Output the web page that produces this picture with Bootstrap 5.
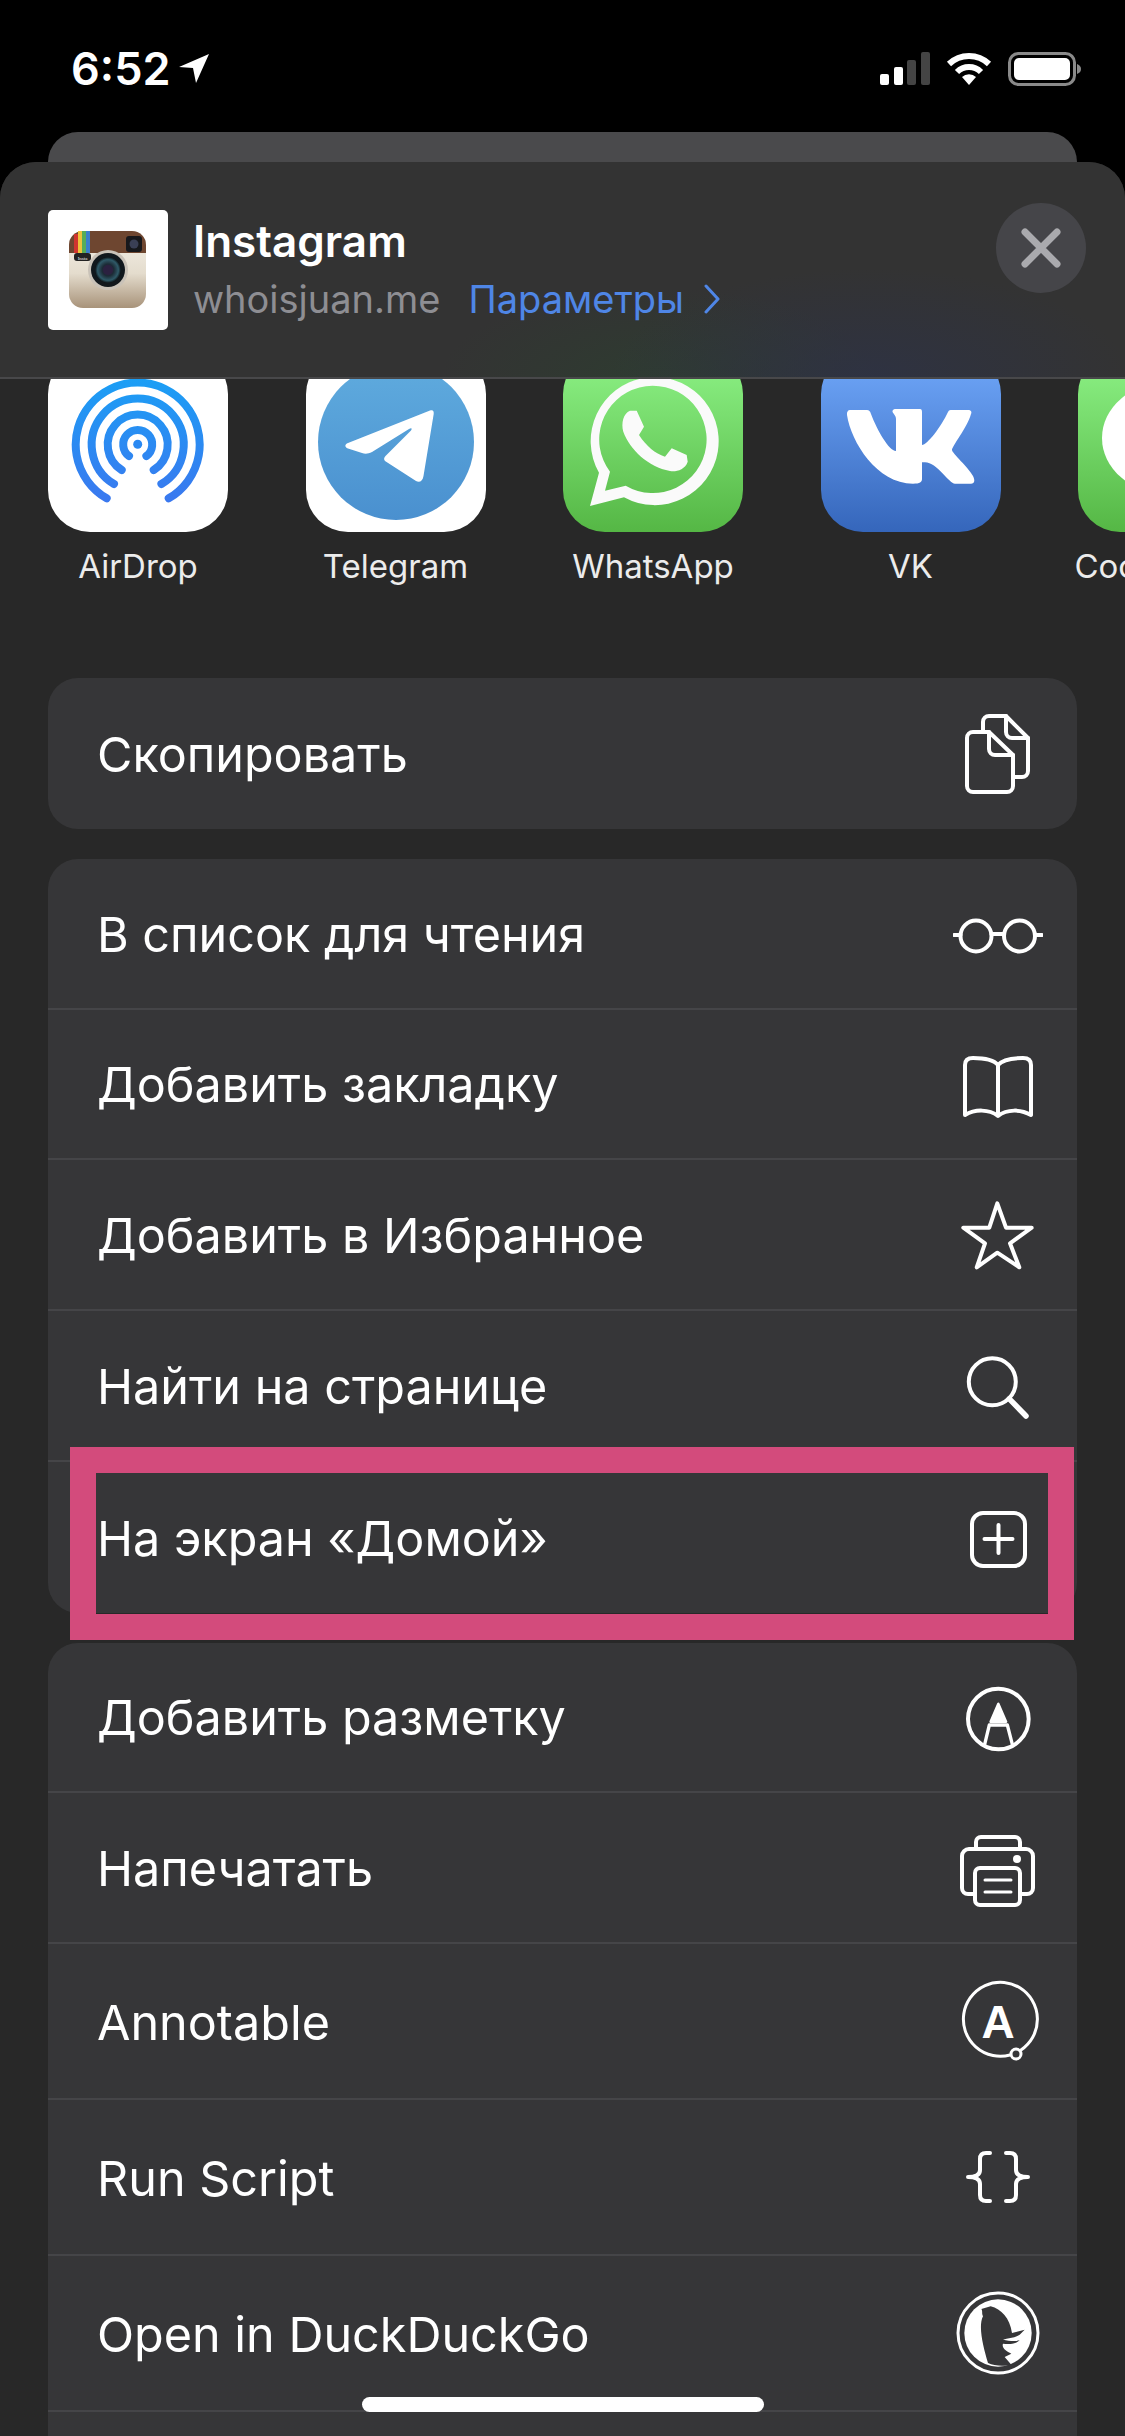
<!doctype html>
<html lang="ru">
  <head>
    <meta charset="utf-8">
    <meta name="viewport" content="width=device-width, initial-scale=1">
    <title>Share sheet</title>
    <link href="https://cdn.jsdelivr.net/npm/bootstrap@5.3.6/dist/css/bootstrap.min.css" rel="stylesheet">
    <style>
      html, body { height: 2436px; }
      body {
        width: 1125px;
        overflow: hidden;
        background: #000;
        color: #fff;
        font-family: Inter, Roboto, "Liberation Sans", sans-serif;
        position: relative;
      }
      .status-bar { height: 132px; padding: 52px 43px 0 71px; }
      .status-time { font-size: 45px; line-height: 34px; font-weight: 600; }
      .back-sheet {
        height: 30px;
        margin: 0 48px;
        background: #4a4a4c;
        border-radius: 36px 36px 0 0;
      }
      .front-sheet {
        height: 2274px;
        background: #282828;
        border-radius: 36px 36px 0 0;
        overflow: hidden;
      }
      .share-head {
        height: 217px;
        padding: 48px 39px 0 48px;
        border-bottom: 2px solid #48484a;
        background:
          radial-gradient(ellipse 260px 110px at 870px 216px, rgba(45, 50, 70, .8), transparent),
          radial-gradient(ellipse 220px 90px at 660px 216px, rgba(45, 62, 48, .8), transparent),
          #333;
      }
      .head-logo { width: 120px; height: 120px; border-radius: 5px; flex: none; }
      .head-text { margin: 6px 0 0 25px; }
      .head-title { font-size: 44px; line-height: 50px; font-weight: 600; }
      .head-sub { margin-top: 8px; font-size: 38px; line-height: 50px; color: #8e8e93; }
      .head-link { margin-left: 28px; color: #4f86e6; }
      .head-chev { margin-left: 20px; }
      .head-close {
        width: 90px;
        height: 90px;
        margin-top: -7px;
        background: #454549;
        border-radius: 50%;
      }
      .app-strip { height: 299px; padding-left: 48px; gap: 77.5px; overflow: hidden; }
      .app-tile { width: 180px; flex: none; margin-top: -27px; }
      .app-tile svg { display: block; border-radius: 42px; }
      .app-name { margin-top: 14px; font-size: 33px; line-height: 40px; color: #ececec; white-space: nowrap; }
      .action-group {
        --bs-list-group-bg: #363638;
        --bs-list-group-color: #fff;
        --bs-list-group-border-width: 0;
        --bs-list-group-border-radius: 30px;
        --bs-list-group-item-padding-x: 0;
        --bs-list-group-item-padding-y: 0;
        margin: 0 48px 30px;
      }
      .action-row {
        height: 150.75px;
        padding-top: 3px !important;
        padding-left: 49px !important;
        padding-right: 34px !important;
        font-size: 48.5px;
        line-height: 60px;
      }
      .action-row:not(:last-child) { border-bottom: 2px solid #454548; }
      .action-row.row-tall { height: 156px; }
      .action-row svg { flex: none; margin-top: -3px; fill: none; stroke: #fff; stroke-width: 4; stroke-linecap: round; stroke-linejoin: round; }
      .pink-frame {
        position: absolute;
        top: -15px;
        left: 22px;
        right: 3px;
        bottom: -27px;
        border: 26px solid #d34b7c;
        z-index: 3;
      }
      .home-bar {
        position: absolute;
        left: 362px;
        top: 2397px;
        width: 402px;
        height: 15px;
        background: #fff;
        border-radius: 8px;
      }
    </style>
  </head>
  <body>
    <div class="status-bar d-flex justify-content-between">
      <div class="d-flex align-items-start">
        <span class="status-time">6:52</span>
        <svg class="ms-2" width="32" height="30" viewBox="0 0 32 30" fill="#fff" style="margin-top:2px"><path d="M1 13 31 0 18 29 15 14Z"/></svg>
      </div>
      <div class="d-flex align-items-start gap-3">
        <svg width="50" height="34" viewBox="0 0 50 34">
          <rect x="0" y="22" width="9" height="11" rx="2" fill="#fff"/>
          <rect x="14" y="15" width="9" height="18" rx="2" fill="#fff"/>
          <rect x="27" y="8" width="9" height="25" rx="2" fill="#444"/>
          <rect x="41" y="0" width="9" height="33" rx="2" fill="#444"/>
        </svg>
        <svg width="46" height="34" viewBox="0 0 46 34" fill="none" stroke="#fff" stroke-width="6">
          <path d="M3 12A29 29 0 0 1 43 12"/>
          <path d="M11 20A17 17 0 0 1 35 20"/>
          <path d="M23 33 16 25A10 10 0 0 1 30 25Z" fill="#fff" stroke="none"/>
        </svg>
        <svg width="74" height="34" viewBox="0 0 74 34">
          <rect x="1.5" y="1.5" width="65" height="31" rx="9" fill="none" stroke="#8a8a8a" stroke-width="3"/>
          <rect x="6" y="6" width="56" height="22" rx="5" fill="#fff"/>
          <path d="M69 12c3 1 4 3 4 5s-1 4-4 5Z" fill="#8a8a8a"/>
        </svg>
      </div>
    </div>
    <div class="back-sheet"></div>
    <div class="front-sheet">
      <div class="share-head d-flex align-items-start">
        <svg class="head-logo" viewBox="0 0 120 120">
          <defs>
            <linearGradient id="igBody" x1="0" y1="0" x2="0" y2="1"><stop offset="0" stop-color="#f5f1ea"/><stop offset=".55" stop-color="#e4dccd"/><stop offset="1" stop-color="#a8937a"/></linearGradient>
            <radialGradient id="igLens"><stop offset="0" stop-color="#3a2c4e"/><stop offset=".45" stop-color="#1c2a35"/><stop offset=".8" stop-color="#2f5a68"/><stop offset="1" stop-color="#0d1418"/></radialGradient>
          </defs>
          <rect width="120" height="120" fill="#fff"/>
          <rect x="21" y="21" width="77" height="77" rx="14" fill="url(#igBody)"/>
          <path d="M21 43V35a14 14 0 0 1 14-14h49a14 14 0 0 1 14 14v8Z" fill="#6e4630"/>
          <path d="M26 43V24h4v19Z" fill="#d0352f"/>
          <path d="M30 43V21h4v22Z" fill="#eec23c"/>
          <path d="M34 43V21h4v22Z" fill="#57ad57"/>
          <path d="M38 43V21h4v22Z" fill="#3b7fcb"/>
          <rect x="26" y="43" width="17" height="8" rx="3" fill="#222"/>
          <text x="34.5" y="49.5" font-size="5" fill="#eee" text-anchor="middle" font-family="Liberation Serif, serif">Insta</text>
          <rect x="78" y="26" width="16" height="16" rx="3" fill="#17181c"/>
          <circle cx="86" cy="34" r="4.5" fill="#3a3f55"/>
          <circle cx="60" cy="60" r="20" fill="#c9c2b8"/>
          <circle cx="60" cy="60" r="17" fill="#11181d"/>
          <circle cx="60" cy="60" r="13" fill="url(#igLens)"/>
          <circle cx="60" cy="60" r="5" fill="#2b2140"/>
        </svg>
        <div class="head-text">
          <div class="head-title">Instagram</div>
          <div class="head-sub d-flex align-items-center">whoisjuan.me
            <span class="head-link d-flex align-items-center">Параметры
              <svg class="head-chev" width="16" height="30" viewBox="0 0 16 30" fill="none" stroke="#4f86e6" stroke-width="3" stroke-linecap="round" stroke-linejoin="round"><path d="M2 2 14 15 2 28"/></svg>
            </span>
          </div>
        </div>
        <div class="head-close ms-auto d-flex align-items-center justify-content-center">
          <svg width="40" height="40" viewBox="0 0 40 40" stroke="#aaaaae" stroke-width="7" stroke-linecap="round"><path d="M4 4 36 36M36 4 4 36"/></svg>
        </div>
      </div>

      <div class="app-strip d-flex">
        <div class="app-tile d-flex flex-column align-items-center">
          <svg width="180" height="180" viewBox="0 0 180 180">
            <defs><linearGradient id="adGrad" gradientUnits="userSpaceOnUse" x1="0" y1="26" x2="0" y2="150"><stop offset="0" stop-color="#1b9ff5"/><stop offset="1" stop-color="#3a78ef"/></linearGradient></defs>
            <rect width="180" height="180" fill="#fff"/>
            <g fill="none" stroke="url(#adGrad)" stroke-width="8" stroke-linecap="round">
              <path d="M58.7 146.3A62 62 0 1 1 120.7 146.3"/>
              <path d="M66 132A46 46 0 1 1 113.4 132"/>
              <path d="M73.7 118A30 30 0 1 1 105.7 118"/>
              <path d="M81 104A14.5 14.5 0 1 1 98.4 104"/>
            </g>
            <circle cx="89.7" cy="92.3" r="4.5" fill="#2a89f2"/>
          </svg>
          <div class="app-name">AirDrop</div>
        </div>
        <div class="app-tile d-flex flex-column align-items-center">
          <svg width="180" height="180" viewBox="0 0 180 180">
            <defs><linearGradient id="tgGrad" x1="0" y1="0" x2="0" y2="1"><stop offset="0" stop-color="#5fabde"/><stop offset="1" stop-color="#4a90cf"/></linearGradient></defs>
            <rect width="180" height="180" fill="#fff"/>
            <circle cx="90" cy="90" r="78" fill="url(#tgGrad)"/>
            <path fill="#fff" d="M124 58.5C127 57.5 128 59 127.7 62L117.5 124C116.8 129 113.5 131 110 129L79 109C77.5 107.5 78 105.5 79.5 104L105 78.5C106.5 76.5 105.5 75.5 103 77L66 100C62 102 59 102 56 101L42 96.5C38.5 95 38.5 92.5 42 91Z"/>
          </svg>
          <div class="app-name">Telegram</div>
        </div>
        <div class="app-tile d-flex flex-column align-items-center">
          <svg width="180" height="180" viewBox="0 0 180 180">
            <defs><linearGradient id="waGrad" x1="0" y1="0" x2="0" y2="1"><stop offset="0" stop-color="#8ef387"/><stop offset="1" stop-color="#55b745"/></linearGradient></defs>
            <rect width="180" height="180" fill="url(#waGrad)"/>
            <path fill="#fafafa" fill-rule="evenodd" d="M27 154 36 120.7A64 64 0 1 1 61 145.3ZM42 138.7 47 119.7A53.7 53.7 0 1 1 62.7 133.7Z"/>
            <path fill="#fafafa" d="M67 58.7H73.7L81 74.7 76 83C83.7 94.7 92 101.3 102 104.7L108.7 96.3 123.7 103 124.7 109.7C122 118 112 120.3 107 119 85.3 114.7 67 98 60.3 79.7 58 71.3 60.3 61.3 67 58.7Z"/>
          </svg>
          <div class="app-name">WhatsApp</div>
        </div>
        <div class="app-tile d-flex flex-column align-items-center">
          <svg width="180" height="180" viewBox="0 0 180 180">
            <defs><linearGradient id="vkGrad" x1="0" y1="0" x2="0" y2="1"><stop offset="0" stop-color="#71a9fb"/><stop offset="1" stop-color="#3566bb"/></linearGradient></defs>
            <rect width="180" height="180" fill="url(#vkGrad)"/>
            <path fill="#fff" d="M29 58H46C48 58 49 59 50 62 56 78 68 99 75 99V67C75 63 71 61 71.5 59 72 57.5 73 57 75 57H99C100.5 57 101 58 101 60V93C106 93 120 75 127 60 128 58 129 58 131 58H147C150 58 151 60 150 62 146 76 131 94 131 98 131 101 148 116 152 124 154 128 154 131.7 150 131.7H134C128 131.7 116 110.3 104 110.3H101V127C101 130 99 131.7 92 131.7 56 131.7 30 90 26 63 25.5 60 27 58 29 58Z"/>
          </svg>
          <div class="app-name">VK</div>
        </div>
        <div class="app-tile d-flex flex-column align-items-center">
          <svg width="180" height="180" viewBox="0 0 180 180">
            <rect width="180" height="180" fill="url(#waGrad)"/>
            <ellipse cx="90" cy="86" rx="66" ry="56" fill="#fff"/>
          </svg>
          <div class="app-name">Сообщения</div>
        </div>
      </div>

      <div class="list-group action-group">
        <div class="list-group-item action-row d-flex justify-content-between align-items-center">
          Скопировать
          <svg width="90" height="90" viewBox="0 0 90 90">
            <path d="M30 24V14a6 6 0 0 1 6-6H53L75 30V63a6 6 0 0 1-6 6H60"/>
            <path d="M53 8V24a6 6 0 0 0 6 6H75"/>
            <path d="M36 24H20a6 6 0 0 0-6 6V78a6 6 0 0 0 6 6H54a6 6 0 0 0 6-6V47Z"/>
            <path d="M36 24V41a6 6 0 0 0 6 6H60"/>
          </svg>
        </div>
      </div>

      <div class="list-group action-group">
        <div class="list-group-item action-row d-flex justify-content-between align-items-center">
          В список для чтения
          <svg width="90" height="90" viewBox="0 0 90 90">
            <circle cx="23" cy="48" r="15.5"/><circle cx="66.5" cy="48" r="15.5"/>
            <path d="M38.5 46H51M1 47H7.5M82 47H89"/>
          </svg>
        </div>
        <div class="list-group-item action-row d-flex justify-content-between align-items-center">
          Добавить закладку
          <svg width="90" height="90" viewBox="0 0 90 90">
            <path d="M45 26C40 20 30 19 20 19 15 19 12 21 12 26V76C22 70 36 70 45 77 54 70 68 70 78 76V26C78 21 75 19 70 19 60 19 50 20 45 26ZM45 26V77"/>
          </svg>
        </div>
        <div class="list-group-item action-row d-flex justify-content-between align-items-center">
          Добавить в Избранное
          <svg width="90" height="90" viewBox="0 0 90 90">
            <path d="M44.3 13.3 53 37.7H78.7L57 53.3 66.3 77.3 44.3 62.7 23.7 77.3 32 53.3 10.3 37.7H36.3Z"/>
          </svg>
        </div>
        <div class="list-group-item action-row d-flex justify-content-between align-items-center">
          Найти на странице
          <svg width="90" height="90" viewBox="0 0 90 90">
            <circle cx="39.3" cy="41.8" r="23.5"/>
            <path d="M56.3 58.8 73 76" stroke-width="5.5"/>
          </svg>
        </div>
        <div class="list-group-item action-row d-flex justify-content-between align-items-center">
          На экран «Домой»
          <svg width="90" height="90" viewBox="0 0 90 90">
            <rect x="19" y="21" width="53" height="53" rx="11"/>
            <path d="M45.5 33V61M31.5 47H59.5"/>
          </svg>
          <div class="pink-frame"></div>
        </div>
      </div>

      <div class="list-group action-group">
        <div class="list-group-item action-row d-flex justify-content-between align-items-center">
          Добавить разметку
          <svg width="90" height="90" viewBox="9 9 270 270">
            <circle cx="145" cy="150" r="91" stroke-width="12"/>
            <path d="M145 105 122 158H168Z" fill="#fff" stroke-width="8"/>
            <path d="M119 168H171M118 168 104 226M172 168 187 226" stroke-width="10"/>
          </svg>
        </div>
        <div class="list-group-item action-row d-flex justify-content-between align-items-center">
          Напечатать
          <svg width="90" height="90" viewBox="0 0 90 90">
            <path d="M23 26V19a5 5 0 0 1 5-5H62a5 5 0 0 1 5 5v7"/>
            <path d="M22 71H15a6 6 0 0 1-6-6V33a7 7 0 0 1 7-7H73a7 7 0 0 1 7 7V65a6 6 0 0 1-6 6H67"/>
            <rect x="22" y="45" width="45" height="37" rx="5"/>
            <path d="M32 57H58M32 69H58" stroke-width="3"/>
            <circle cx="64" cy="36" r="4" fill="#fff" stroke="none"/>
          </svg>
        </div>
        <div class="list-group-item action-row row-tall d-flex justify-content-between align-items-center">
          Annotable
          <svg width="90" height="90" viewBox="0 0 90 90">
            <path d="M57 79A37 37 0 1 1 68 74" stroke-width="3"/>
            <circle cx="63" cy="78" r="5" stroke-width="3"/>
            <text x="45" y="62" font-size="46" font-weight="700" fill="#fff" stroke="none" text-anchor="middle" font-family="Liberation Sans, sans-serif">A</text>
          </svg>
        </div>
        <div class="list-group-item action-row row-tall d-flex justify-content-between align-items-center">
          Run Script
          <svg width="90" height="90" viewBox="0 0 90 90">
            <path d="M37 21H33C29 21 27 23 27 27V38C27 42 24 45 15 45 24 45 27 48 27 52V63C27 67 29 69 33 69H37"/>
            <path d="M53 21H57C61 21 63 23 63 27V38C63 42 66 45 75 45 66 45 63 48 63 52V63C63 67 61 69 57 69H53"/>
          </svg>
        </div>
        <div class="list-group-item action-row row-tall d-flex justify-content-between align-items-center">
          Open in DuckDuckGo
          <svg width="90" height="90" viewBox="15 15 270 270">
            <circle cx="150" cy="150" r="120" stroke-width="9"/>
            <circle cx="150" cy="150" r="101" fill="#fff" stroke="none"/>
            <path fill="#363638" stroke="none" d="M100 78 128 70C160 78 185 105 192 150L230 140 215 155C200 165 180 165 165 170 185 175 205 175 215 172 205 182 185 185 165 182 160 195 175 205 190 212L170 222 190 245C170 250 140 250 120 240 105 190 90 130 105 100 100 90 105 85 100 78Z"/>
          </svg>
        </div>
        <div class="list-group-item action-row"></div>
      </div>
    </div>
    <div class="home-bar"></div>
    <script src="https://cdn.jsdelivr.net/npm/bootstrap@5.3.6/dist/js/bootstrap.bundle.min.js"></script>
  </body>
</html>
